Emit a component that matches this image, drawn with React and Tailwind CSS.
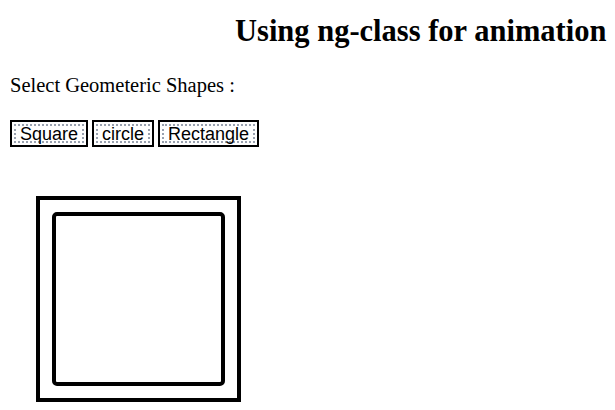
const shapes = ['Square', 'circle', 'Rectangle'];

function ShapeButton({ label }) {
  return (
    <button className="h-[27px] border-2 border-black bg-white p-[2px] leading-none">
      <span
        className="flex h-full items-center border-2 border-dotted border-gray-400 px-[4px] text-[18px] text-black"
        style={{ fontFamily: '"Liberation Sans", Arial, sans-serif' }}
      >
        {label}
      </span>
    </button>
  );
}

export default function App() {
  return (
    <div className="w-[615px] h-[410px] overflow-hidden bg-white text-black" style={{ fontFamily: '"Liberation Serif", "Times New Roman", serif' }}>
      <h2 className="pl-[235px] pt-[13px] text-[30.5px] font-bold leading-[36px] whitespace-nowrap">
        Using ng-class for animation
      </h2>
      <p className="mt-[24px] pl-[10px] text-[20.5px] leading-[24px]">Select Geometeric Shapes :</p>
      <div className="mt-[23px] flex gap-[4px] pl-[10px]">
        {shapes.map((s) => (
          <ShapeButton key={s} label={s} />
        ))}
      </div>
      <div className="ml-[36px] mt-[49px] w-[205px] h-[206px] border-4 border-black p-[12px]">
        <div className="h-full w-full rounded-[5px] border-4 border-black" />
      </div>
    </div>
  );
}
